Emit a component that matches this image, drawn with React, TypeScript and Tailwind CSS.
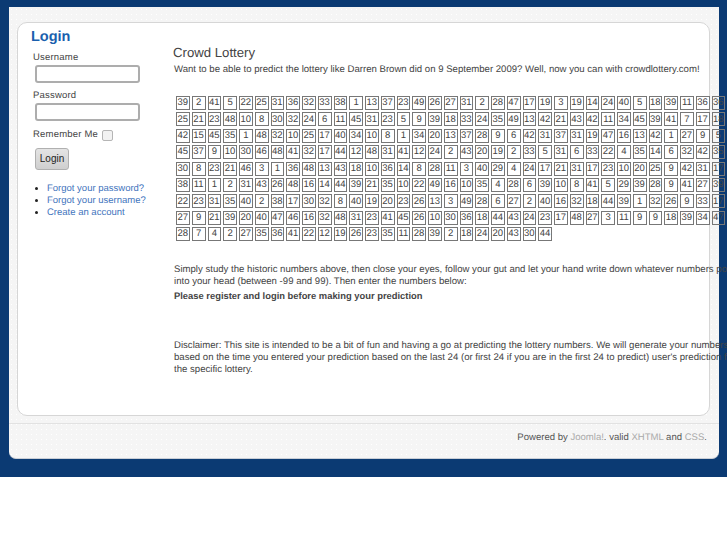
const rows = [
  "39 2 41 5 22 25 31 36 32 33 38 1 13 37 23 49 26 27 31 2 28 47 17 19 3 19 14 24 40 5 18 39 11 36 36",
  "25 21 23 48 10 8 30 32 24 6 11 45 31 23 5 9 39 18 33 24 35 49 13 42 21 43 42 11 34 45 39 41 7 17 18",
  "42 15 45 35 1 48 32 10 25 17 40 34 10 8 1 34 20 13 37 28 9 6 42 31 37 31 19 47 16 13 42 1 27 9 5",
  "45 37 9 10 30 46 48 41 32 17 44 12 48 31 41 12 24 2 43 20 19 2 33 5 31 6 33 22 4 35 14 6 32 42 35",
  "30 8 23 21 46 3 1 36 48 13 43 18 10 36 14 8 28 11 3 40 29 4 24 17 21 31 17 23 10 20 25 9 42 31 17",
  "38 11 1 2 31 43 26 48 16 14 44 39 21 35 10 22 49 16 10 35 4 28 6 39 10 8 41 5 29 39 28 9 41 27 39",
  "22 23 31 35 40 2 38 17 30 32 8 40 19 20 23 26 13 3 49 28 6 27 2 40 16 32 18 44 39 1 32 26 9 33 17",
  "27 9 21 39 20 40 47 46 16 32 48 31 23 41 45 26 10 30 36 18 44 43 24 23 17 48 27 3 11 9 9 18 39 34 47",
  "28 7 4 2 27 35 36 41 22 12 19 26 23 35 11 28 39 2 18 24 20 43 30 44",
].map((r) => r.split(" "));

const field = "block h-[18px] w-[105px] rounded-[3px] border-2 border-[#adadad] bg-white";

export default function App() {
  return (
    <div className="h-[545px] w-[727px] overflow-hidden bg-white font-['Liberation_Sans',Arial,sans-serif] text-[9.6px] leading-[12px] text-[#444] [text-rendering:geometricPrecision]">
      <div className="h-[477px] bg-[#0b3a73] pl-[9px] pt-[7px]">
        <div className="h-[452px] w-[710px] rounded-b-[7px] border-b border-[#c9ced6] bg-[#f5f5f5] bg-[radial-gradient(#ffffff_0.6px,transparent_0.8px)] bg-[length:5px_5px] pl-[8px] pr-[9px] pt-[15px]">
          <div className="flex h-[394px] rounded-[10px] border border-[#d6d6d6] bg-white">
            <aside className="w-[156px] shrink-0 pl-[13px] pt-[5px] text-[9.5px]">
              <h2 className="text-[14.5px] font-bold leading-[18px] text-[#1a5fae]">Login</h2>
              <label className="ml-[2px] mt-[6px] block tracking-[0.2px]">Username</label>
              <input aria-label="Username" className={`${field} ml-[4px] mt-[1px]`} />
              <label className="ml-[2px] mt-[7px] block tracking-[0.2px]">Password</label>
              <input aria-label="Password" className={`${field} ml-[4px] mt-[1px]`} />
              <div className="ml-[2px] mt-[8px] flex items-center gap-[4px] tracking-[0.2px]">
                <span>Remember Me</span>
                <span className="h-[11px] w-[11px] rounded-[2px] border border-[#b5b5b5] bg-[#f2f2f2]" />
              </div>
              <button className="ml-[4px] mt-[7px] h-[22px] w-[34px] rounded-[3px] border border-[#b0b0b0] bg-gradient-to-b from-[#e4e4e4] to-[#cfcfcf] text-[10px] text-[#222]">
                Login
              </button>
              <ul className="ml-[16px] mt-[13px] list-disc text-[#3f74bd] marker:text-[#222]">
                <li>Forgot your password?</li>
                <li>Forgot your username?</li>
                <li>Create an account</li>
              </ul>
            </aside>
            <main className="min-w-0 flex-1 whitespace-nowrap pt-[22px]">
              <h1 className="-ml-[1px] text-[13.2px] leading-[16px] text-[#444]">Crowd Lottery</h1>
              <p className="mt-[3px]">
                Want to be able to predict the lottery like Darren Brown did on 9 September 2009? Well, now you can with crowdlottery.com!
              </p>
              <div className="ml-[2px] mt-[20px] flex flex-col gap-[2.4px]">
                {rows.map((row, i) => (
                  <div key={i} className="flex gap-[2px]">
                    {row.map((n, j) => (
                      <span
                        key={j}
                        className="flex h-[14px] w-[13.76px] shrink-0 items-center justify-center border border-[#777] text-[9.5px] leading-none text-[#444]"
                      >
                        {n}
                      </span>
                    ))}
                  </div>
                ))}
              </div>
              <p className="mt-[23px]">
                Simply study the historic numbers above, then close your eyes, follow your gut and let your hand write down whatever numbers pop
                <br />
                into your head (between -99 and 99). Then enter the numbers below:
              </p>
              <p className="mt-[2px] text-[9.4px] font-bold">Please register and login before making your prediction</p>
              <p className="mt-[38px]">
                Disclaimer: This site is intended to be a bit of fun and having a go at predicting the lottery numbers. We will generate your numbers
                <br />
                based on the time you entered your prediction based on the last 24 (or first 24 if you are in the first 24 to predict) user's prediction for
                <br />
                the specific lottery.
              </p>
            </main>
          </div>
          <footer className="-mr-[9px] -ml-[8px] mt-[7px] border-t border-[#e2e2e2] pr-[12px] pt-[8px] text-right text-[9.55px] text-[#555]">
            Powered by <span className="text-[#aaa]">Joomla!</span>. valid <span className="text-[#aaa]">XHTML</span> and <span className="text-[#aaa]">CSS</span>.
          </footer>
        </div>
      </div>
    </div>
  );
}
